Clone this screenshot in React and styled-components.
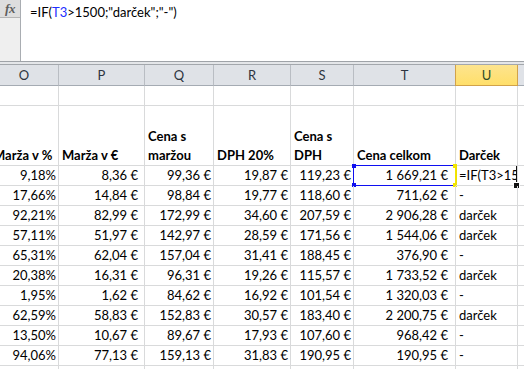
import React from "react";
import styled, { createGlobalStyle, css } from "styled-components";

const Global = createGlobalStyle`
  html, body { margin: 0; padding: 0; background: #fff; }
  body { font-family: Lato, "Noto Sans", sans-serif; font-size: 13px; color: #000; }
`;

const Page = styled.div`
  width: 524px;
  height: 369px;
  overflow: hidden;
  background: #fff;
`;

const FormulaBar = styled.div`
  display: flex;
  height: 61px;
  border-bottom: 1px solid #9fa3a8;
`;

const FxColumn = styled.div`
  width: 20px;
  flex: none;
  background: #efefef;
  border-right: 1px solid #a9adb2;
  display: flex;
  flex-direction: column;
`;

const FxBox = styled.div`
  height: 17px;
  background: #dedede;
  border-bottom: 1px solid #b5b5b5;
  display: flex;
  align-items: center;
  justify-content: center;
  font-family: "Liberation Serif", serif;
  font-style: italic;
  font-weight: bold;
  font-size: 13px;
  color: #5e5e5e;
  letter-spacing: -0.5px;
`;

const FormulaInput = styled.div`
  flex: 1;
  padding: 2px 0 0 9px;
  line-height: 20px;
  white-space: nowrap;
`;

const Ref = styled.span`
  color: #1f2fff;
`;

const Splitter = styled.div`
  height: 2px;
  background: #e4e6e9;
  border-bottom: 1px solid #a3a7ac;
`;

const Sheet = styled.div`
  margin-left: -10px;
  display: flex;
  flex-direction: column;
`;

const Row = styled.div`
  display: flex;
  height: ${(p) => p.$h}px;
  flex: none;
`;

const Cell = styled.div`
  position: relative;
  box-sizing: border-box;
  width: ${(p) => p.$w}px;
  flex: none;
  border-right: 1px solid #d9dadb;
  border-bottom: 1px solid #d9dadb;
  white-space: nowrap;
  overflow: ${(p) => (p.$clip ? "hidden" : "visible")};
  line-height: 19px;
  padding: 0 ${(p) => p.$pr ?? 2}px 0 3px;
  text-align: ${(p) => (p.$right ? "right" : "left")};
`;

const HeadCell = styled.div`
  box-sizing: border-box;
  width: ${(p) => p.$w}px;
  flex: none;
  border-right: 1px solid ${(p) => (p.$sel ? "#d1a24a" : "#b9bdc3")};
  border-bottom: 1px solid ${(p) => (p.$sel ? "#d1a24a" : "#a5abb3")};
  background: ${(p) =>
    p.$sel ? "linear-gradient(#fde48e, #ffdf6a)" : "#dfe2e7"};
  color: ${(p) => (p.$sel ? "#2e4a2a" : "#2d3440")};
  text-align: center;
  line-height: 20px;
  ${(p) => p.$sel && css`margin-left: -1px; width: ${p.$w + 1}px; border-left: 1px solid #d1a24a;`}
`;

const TitleCell = styled(Cell)`
  display: flex;
  align-items: flex-end;
  white-space: normal;
  font-weight: bold;
  line-height: 18.5px;
  padding-bottom: 1px;
`;

const RefBox = styled.div`
  position: absolute;
  left: -1px;
  top: -1px;
  right: -1px;
  bottom: -1px;
  border: 1px solid #1010f0;
  border-right-color: #f2e600;
  pointer-events: none;
`;

const Handle = styled.span`
  position: absolute;
  width: 4px;
  height: 4px;
  background: ${(p) => p.$c};
  ${(p) => (p.$top ? "top: -2px;" : "bottom: -2px;")}
  ${(p) => (p.$left ? "left: -2px;" : "right: -2px;")}
`;

const ActiveBox = styled.div`
  position: absolute;
  left: -1px;
  top: -2px;
  right: -1px;
  bottom: -2px;
  border: 2px solid #111;
  border-left-color: #efe000;
  pointer-events: none;
`;

const FillHandle = styled.span`
  position: absolute;
  left: -5px;
  bottom: -4px;
  width: 5px;
  height: 5px;
  background: #111;
  border: 1px solid #fff;
`;

const cols = [
  { k: "O", w: 69, pr: 2 },
  { k: "P", w: 86, pr: 6 },
  { k: "Q", w: 69, pr: 2 },
  { k: "R", w: 77, pr: 2 },
  { k: "S", w: 63, pr: 2 },
  { k: "T", w: 102, pr: 7 },
  { k: "U", w: 62, pr: 2 },
  { k: "V", w: 70, pr: 2 },
];

const titles = ["Marža v %", "Marža v €", "Cena s maržou", "DPH 20%", "Cena s DPH", "Cena celkom", "Darček", ""];

const data = [
  ["9,18%", "8,36 €", "99,36 €", "19,87 €", "119,23 €", "1 669,21 €", null],
  ["17,66%", "14,84 €", "98,84 €", "19,77 €", "118,60 €", "711,62 €", "-"],
  ["92,21%", "82,99 €", "172,99 €", "34,60 €", "207,59 €", "2 906,28 €", "darček"],
  ["57,11%", "51,97 €", "142,97 €", "28,59 €", "171,56 €", "1 544,06 €", "darček"],
  ["65,31%", "62,04 €", "157,04 €", "31,41 €", "188,45 €", "376,90 €", "-"],
  ["20,38%", "16,31 €", "96,31 €", "19,26 €", "115,57 €", "1 733,52 €", "darček"],
  ["1,95%", "1,62 €", "84,62 €", "16,92 €", "101,54 €", "1 320,03 €", "-"],
  ["62,59%", "58,83 €", "152,83 €", "30,57 €", "183,40 €", "2 200,75 €", "darček"],
  ["13,50%", "10,67 €", "89,67 €", "17,93 €", "107,60 €", "968,42 €", "-"],
  ["94,06%", "77,13 €", "159,13 €", "31,83 €", "190,95 €", "190,95 €", "-"],
  ["", "", "", "", "", "", ""],
];

export default function App() {
  return (
    <Page>
      <Global />
      <FormulaBar>
        <FxColumn>
          <FxBox>fx</FxBox>
        </FxColumn>
        <FormulaInput>
          =IF(<Ref>T3</Ref>&gt;1500;"darček";"-")
        </FormulaInput>
      </FormulaBar>
      <Splitter />
      <Sheet>
        <Row $h={21}>
          {cols.map((c) => (
            <HeadCell key={c.k} $w={c.w} $sel={c.k === "U"}>
              {c.k}
            </HeadCell>
          ))}
        </Row>
        <Row $h={20}>
          {cols.map((c) => (
            <Cell key={c.k} $w={c.w} />
          ))}
        </Row>
        <Row $h={60}>
          {cols.map((c, i) => (
            <TitleCell key={c.k} $w={c.w}>
              {titles[i]}
            </TitleCell>
          ))}
        </Row>
        {data.map((r, ri) => (
          <Row key={ri} $h={20}>
            {cols.map((c, i) => {
              const v = r[i] ?? "";
              if (ri === 0 && c.k === "T") {
                return (
                  <Cell key={c.k} $w={c.w} $pr={c.pr} $right>
                    {v}
                    <RefBox>
                      <Handle $c="#1010f0" $top $left />
                      <Handle $c="#1010f0" $left />
                      <Handle $c="#f2e600" $top />
                      <Handle $c="#f2e600" />
                    </RefBox>
                  </Cell>
                );
              }
              if (ri === 0 && c.k === "U") {
                return (
                  <Cell key={c.k} $w={c.w} $clip>
                    =IF(T3&gt;1500;"darček";"-")
                    <ActiveBox />
                  </Cell>
                );
              }
              if (ri === 0 && c.k === "V") {
                return (
                  <Cell key={c.k} $w={c.w}>
                    <FillHandle />
                  </Cell>
                );
              }
              return (
                <Cell key={c.k} $w={c.w} $pr={c.pr} $right={c.k !== "U"}>
                  {v}
                </Cell>
              );
            })}
          </Row>
        ))}
      </Sheet>
    </Page>
  );
}
